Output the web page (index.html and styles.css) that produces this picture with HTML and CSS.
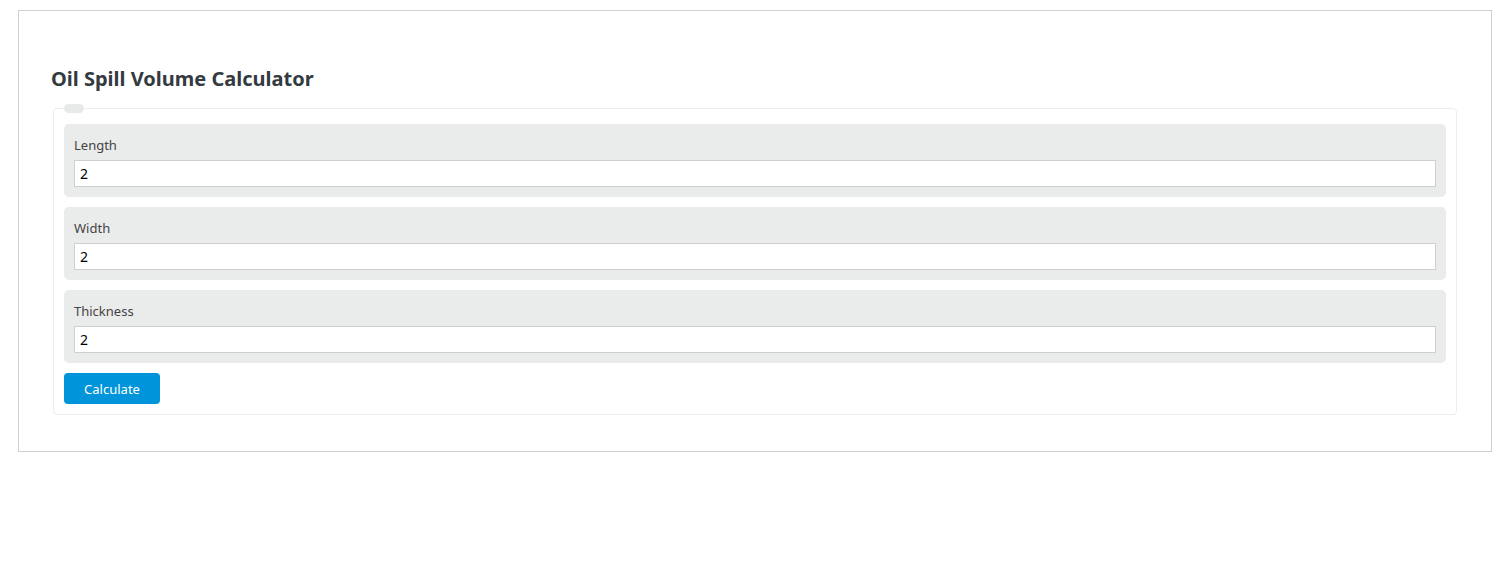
FILE: index.html
```html
<!DOCTYPE html>
<html>
<head>
<meta charset="utf-8">
<link rel="stylesheet" href="styles.css">
</head>
<body>
<div class="page">
  <h2 class="title">Oil Spill Volume Calculator</h2>
  <fieldset class="calc">
    <legend class="calc-legend"></legend>
    <div class="fields">
      <div class="field">
        <label class="field-label" for="length">Length</label>
        <input class="field-input" id="length" type="text" value="2">
      </div>
      <div class="field">
        <label class="field-label" for="width">Width</label>
        <input class="field-input" id="width" type="text" value="2">
      </div>
      <div class="field">
        <label class="field-label" for="thickness">Thickness</label>
        <input class="field-input" id="thickness" type="text" value="2">
      </div>
    </div>
    <button class="calc-btn" type="button">Calculate</button>
  </fieldset>
</div>
</body>
</html>
```
FILE: styles.css
```css
html, body {
  margin: 0;
  padding: 0;
  background: #fff;
  font-family: "Noto Sans", "Open Sans", sans-serif;
}
.page {
  margin: 10px 17px 0 18px;
  border: 1px solid #cfcfcf;
  padding: 0 32px 36px;
}
.title {
  margin: 56px 0 13px;
  font-size: 20px;
  line-height: 24px;
  font-weight: 700;
  color: #333a40;
}
.calc {
  margin: 0 2px;
  padding: 11px 10px 10px;
  border: 1px solid #ececec;
  border-radius: 4px;
}
.calc-legend {
  width: 20px;
  height: 9px;
  padding: 0;
  margin-left: 0;
  background: #e8e9e9;
  border-radius: 5px;
}
.fields {
  display: flex;
  flex-direction: column;
  gap: 10px;
}
.field {
  background: #eaebeb;
  border-radius: 5px;
  padding: 10px;
  display: flex;
  flex-direction: column;
}
.field-label {
  font-size: 13px;
  line-height: 20px;
  color: #444;
  padding-top: 1px;
  margin-bottom: 5px;
}
.field-input {
  box-sizing: border-box;
  height: 27px;
  border: 1px solid #cfcfcf;
  padding: 0 5px;
  font-family: "Noto Sans", "Open Sans", sans-serif;
  font-size: 14px;
  color: #000;
  background: #fff;
  outline: none;
}
.calc-btn {
  margin-top: 10px;
  width: 96px;
  height: 31px;
  border: none;
  border-radius: 4px;
  background: #0095da;
  color: #fff;
  font-family: "Noto Sans", "Open Sans", sans-serif;
  font-size: 13px;
  padding: 0;
  cursor: pointer;
}
```
